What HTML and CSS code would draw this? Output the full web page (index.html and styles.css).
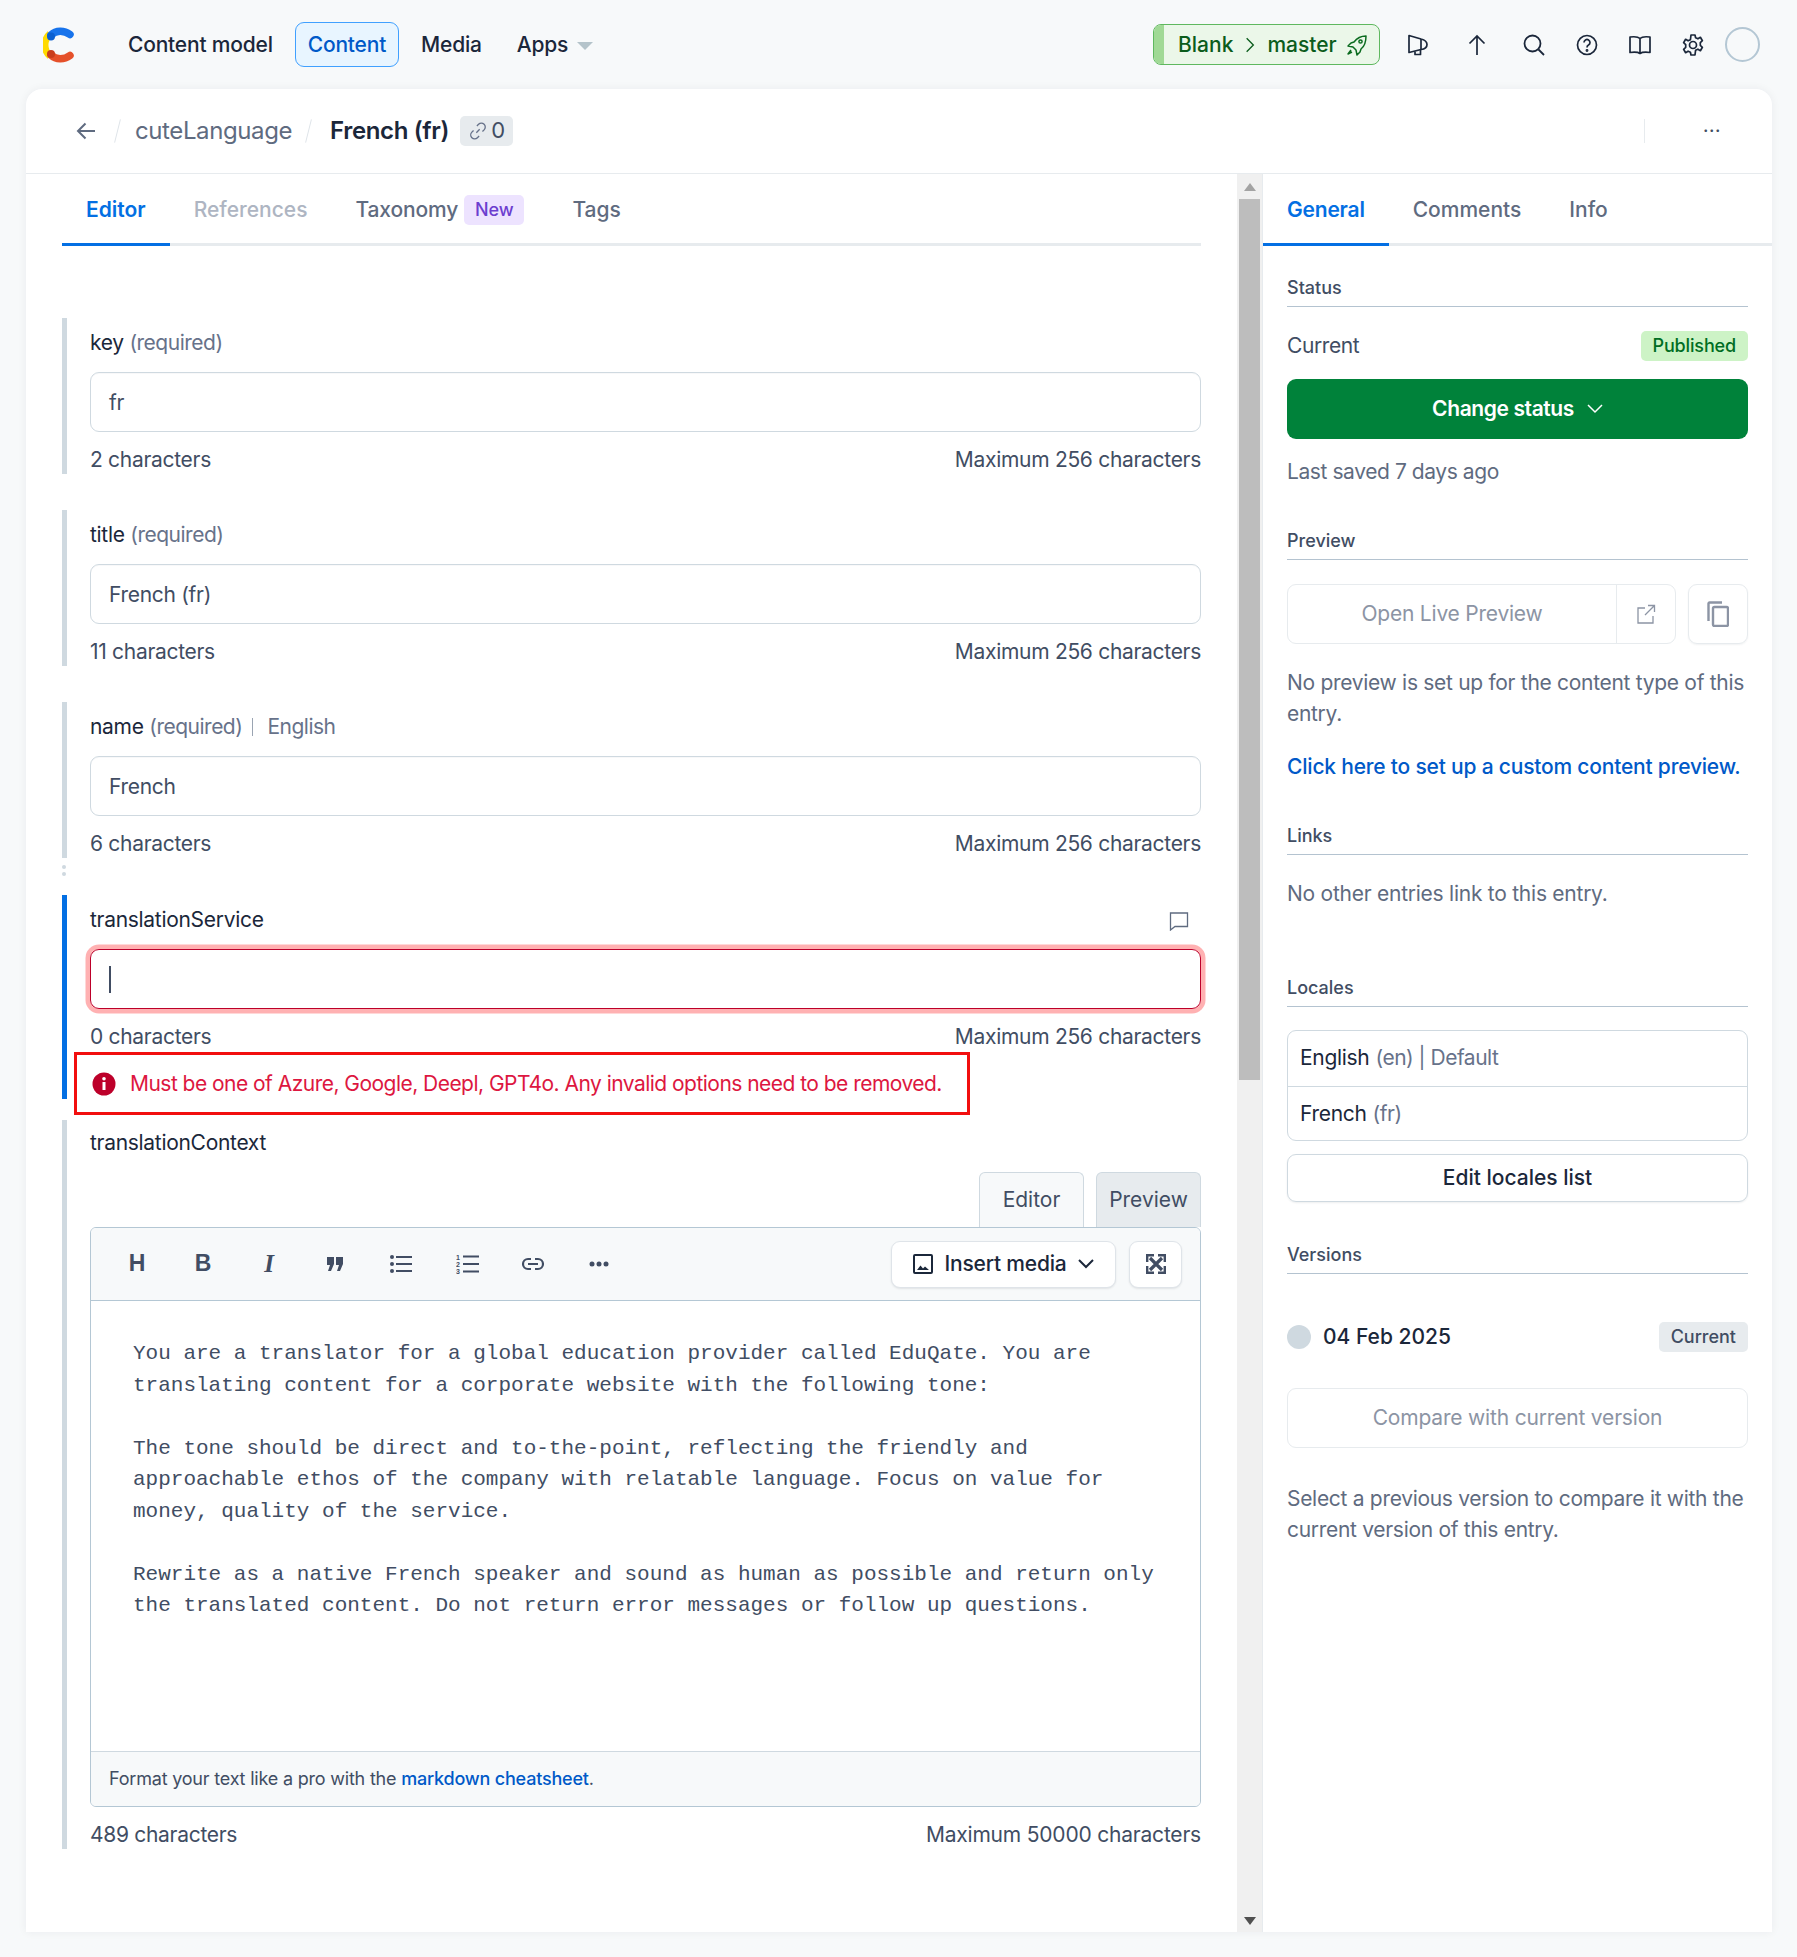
FILE: index.html
```html
<!DOCTYPE html>
<html lang="en">
<head>
<meta charset="utf-8">
<title>French (fr) - Contentful</title>
<link rel="stylesheet" href="styles.css">
</head>
<body>
<div class="app">
  <nav class="topnav">
    <svg class="logo" viewBox="0 0 33 36" width="33" height="36">
      <path d="M7 29 A14.5 14.5 0 0 1 7 7" fill="none" stroke="#ffda00" stroke-width="7"/>
      <path d="M8 8 C13 3 21 3 27 7.5" fill="none" stroke="#1773eb" stroke-width="7.5" stroke-linecap="round"/>
      <path d="M8 28 C13 33 21 33 27 28.5" fill="none" stroke="#e5512a" stroke-width="7.5" stroke-linecap="round"/>
      <circle cx="8" cy="9.5" r="4" fill="#0a5fd0"/>
      <circle cx="8" cy="27" r="4" fill="#c93e1d"/>
    </svg>
    <a class="navlink">Content model</a>
    <a class="navlink active">Content</a>
    <a class="navlink">Media</a>
    <a class="navlink apps">Apps<span class="caret"></span></a>
    <div class="nav-right">
      <div class="env">
        <span class="env-strip"></span>
        <span>Blank</span>
        <svg class="env-chevron" viewBox="0 0 12 20" width="10" height="18"><path d="M2 2l8 8-8 8" fill="none" stroke="#0b5c1c" stroke-width="1.6"/></svg>
        <span>master</span>
        <svg viewBox="0 0 22 22" width="22" height="22" fill="none" stroke="#0b6b1f" stroke-width="1.5" stroke-linejoin="round"><path d="M20 2c-5 0-9 2-12 6l-3 1-3 3 5 1 3 3 1 5 3-3 1-3c4-3 5-8 5-13z"/><circle cx="14.5" cy="7.5" r="1.6"/><path d="M5 16l-3 4 4-2"/></svg>
      </div>
      <div class="nav-icons">
        <svg viewBox="0 0 24 24" width="24" height="24" fill="none" stroke="#1b273a" stroke-width="1.7" stroke-linejoin="round"><path d="M3 2.500l12 3.500c4 1 6 3 6 5.500s-2 4.500-6 5l-12 3z"/><path d="M9 18.500v3h5.500v-5"/><path d="M15 6v11"/></svg>
        <svg class="icon-up" viewBox="0 0 24 24" width="24" height="24" fill="none" stroke="#1b273a" stroke-width="1.7"><path d="M12 22V3M4.500 10.500L12 3l7.500 7.500"/></svg>
        <svg class="icon-search" viewBox="0 0 24 24" width="24" height="24" fill="none" stroke="#1b273a" stroke-width="1.800"><circle cx="10.500" cy="10.500" r="8"/><path d="M16.500 16.500L22 22"/></svg>
        <svg viewBox="0 0 24 24" width="24" height="24" fill="none" stroke="#1b273a" stroke-width="1.700"><circle cx="12" cy="12" r="9.500"/><path d="M9 9.500a3 3 0 1 1 4.500 2.600c-1 .6-1.500 1.200-1.500 2.400"/><circle cx="12" cy="17.500" r=".6"/></svg>
        <svg viewBox="0 0 24 24" width="24" height="24" fill="none" stroke="#1b273a" stroke-width="1.700" stroke-linejoin="round"><path d="M12 5.500C10 3.500 6 3.500 2 4v15.500c4-.5 8-.5 10 1 2-1.500 6-1.500 10-1V4c-4-.5-8-.5-10 1.500zM12 5.500v15"/></svg>
        <svg viewBox="0 0 24 24" width="24" height="24" fill="none" stroke="#1b273a" stroke-width="1.700" stroke-linejoin="round"><circle cx="12" cy="12" r="3.500"/><path d="M10 2h4l.6 2.800 2.300 1 2.500-1.500 2 3.400-2.100 1.900v2.800l2.100 1.900-2 3.400-2.500-1.500-2.300 1L14 22h-4l-.6-2.800-2.300-1-2.500 1.500-2-3.400 2.100-1.900V11.600L2.600 9.700l2-3.400 2.500 1.500 2.300-1z"/></svg>
      </div>
      <span class="avatar"></span>
    </div>
  </nav>

  <main class="card">
    <header class="crumbs">
      <svg class="back" viewBox="0 0 22 22" width="22" height="22" fill="none" stroke="#5f6b80" stroke-width="2"><path d="M20 11H3M10.500 3.500L3 11l7.500 7.500"/></svg>
      <span class="slash"></span>
      <span class="crumb">cuteLanguage</span>
      <span class="slash"></span>
      <span class="crumb-current">French (fr)</span>
      <span class="linkcount">
        <svg viewBox="0 0 18 18" width="20" height="20" fill="none" stroke="#67728a" stroke-width="1.200"><path d="M7.500 10.500l3-3M8 4.500l1.500-1.500a3.500 3.500 0 0 1 5 5L13 9.500M10 13.500L8.500 15a3.500 3.500 0 0 1-5-5L5 8.500"/></svg>
        0
      </span>
      <span class="crumbs-right">
        <span class="vline"></span>
        <span class="dots">···</span>
      </span>
    </header>

    <div class="panes">
      <section class="left">
        <div class="tabs">
          <span class="tab on">Editor</span>
          <span class="tab off">References</span>
          <span class="tab tight-tab">Taxonomy<span class="newbadge">New</span></span>
          <span class="tab">Tags</span>
        </div>

        <div class="field first">
          <div class="label">key <span class="muted">(required)</span></div>
          <div class="input">fr</div>
          <div class="counter"><span>2 characters</span><span>Maximum 256 characters</span></div>
        </div>
        <div class="field">
          <div class="label">title <span class="muted">(required)</span></div>
          <div class="input">French (fr)</div>
          <div class="counter"><span>11 characters</span><span>Maximum 256 characters</span></div>
        </div>
        <div class="field">
          <div class="label">name <span class="muted">(required)</span><span class="pipe"></span><span class="muted">English</span></div>
          <div class="input">French</div>
          <div class="counter"><span>6 characters</span><span>Maximum 256 characters</span></div>
        </div>
        <div class="handle"><i></i><i></i></div>
        <div class="field focus">
          <div class="label between">translationService
            <svg viewBox="0 0 20 20" width="20" height="20" fill="none" stroke="#5f6b80" stroke-width="1.300"><path d="M1.500 2h17v13.500H6L1.500 19z"/></svg>
          </div>
          <div class="input invalid"><span class="caretline"></span></div>
          <div class="counter"><span>0 characters</span><span>Maximum 256 characters</span></div>
          <div class="error">
            <svg class="error-icon" viewBox="0 0 24 24" width="24" height="24"><circle cx="12" cy="12" r="11.500" fill="#bd002a"/><rect x="10.500" y="10" width="3" height="8" fill="#fff"/><circle cx="12" cy="6.800" r="1.800" fill="#fff"/></svg>
            <span>Must be one of Azure, Google, Deepl, GPT4o. Any invalid options need to be removed.</span>
          </div>
        </div>
        <div class="field rich">
          <div class="label tight">translationContext</div>
          <div class="mode-tabs">
            <span class="mode">Editor</span>
            <span class="mode sel">Preview</span>
          </div>
          <div class="md">
            <div class="toolbar">
              <span class="tool txt">H</span>
              <span class="tool txt">B</span>
              <span class="tool txt ital">I</span>
              <span class="tool"><svg viewBox="0 0 18 14" width="18" height="14" fill="#414d63"><path d="M1 0h7v7l-3 7H2l2-6H1zM10 0h7v7l-3 7h-3l2-6h-3z"/></svg></span>
              <span class="tool"><svg viewBox="0 0 22 18" width="22" height="18" fill="#414d63"><circle cx="2" cy="2" r="2"/><circle cx="2" cy="9" r="2"/><circle cx="2" cy="16" r="2"/><rect x="6" y="1" width="16" height="2"/><rect x="6" y="8" width="16" height="2"/><rect x="6" y="15" width="16" height="2"/></svg></span>
              <span class="tool"><svg viewBox="0 0 23 20" width="23" height="20" fill="#414d63"><text x="0" y="5.500" class="olnum">1</text><text x="0" y="12.500" class="olnum">2</text><text x="0" y="19.500" class="olnum">3</text><rect x="7" y="1.500" width="16" height="2"/><rect x="7" y="9" width="16" height="2"/><rect x="7" y="16.500" width="16" height="2"/></svg></span>
              <span class="tool"><svg viewBox="0 0 24 14" width="24" height="14" fill="none" stroke="#414d63" stroke-width="2.200"><path d="M10 2H7a5 5 0 0 0 0 10h3M14 2h3a5 5 0 0 1 0 10h-3M7 7h10"/></svg></span>
              <span class="tool"><svg viewBox="0 0 20 6" width="20" height="6" fill="#414d63"><circle cx="3" cy="3" r="2.500"/><circle cx="10" cy="3" r="2.500"/><circle cx="17" cy="3" r="2.500"/></svg></span>
              <span class="toolbar-right">
                <span class="btn insert">
                  <svg viewBox="0 0 20 20" width="20" height="20" fill="none" stroke="#1b273a" stroke-width="2"><rect x="1" y="1" width="18" height="18" rx="1"/><path d="M4 16l3.500-4.500 2.500 3 2-2 4 3.500z" fill="#1b273a" stroke="none"/></svg>
                  Insert media
                  <svg viewBox="0 0 16 10" width="16" height="10" fill="none" stroke="#1b273a" stroke-width="2"><path d="M1 1l7 7 7-7"/></svg>
                </span>
                <span class="btn square">
                  <svg viewBox="0 0 20 20" width="20" height="20" fill="none" stroke="#414d63" stroke-width="3.200"><path d="M4 4l12 12M16 4L4 16"/><path d="M1.200 8V1.200H8M12 1.200h6.800V8M18.800 12v6.800H12M8 18.800H1.200V12" stroke-width="2.400"/></svg>
                </span>
              </span>
            </div>
            <div class="md-body">You are a translator for a global education provider called EduQate. You are
translating content for a corporate website with the following tone:

The tone should be direct and to-the-point, reflecting the friendly and
approachable ethos of the company with relatable language. Focus on value for
money, quality of the service.

Rewrite as a native French speaker and sound as human as possible and return only
the translated content. Do not return error messages or follow up questions.</div>
            <div class="md-foot">Format your text like a pro with the <a class="link-strong">markdown cheatsheet</a>.</div>
          </div>
          <div class="counter"><span>489 characters</span><span>Maximum 50000 characters</span></div>
        </div>
      </section>

      <div class="scrollbar">
        <span class="arrow up"></span>
        <span class="thumb"></span>
        <span class="arrow down"></span>
      </div>

      <aside class="side">
        <div class="tabs side-tabs">
          <span class="tab on">General</span>
          <span class="tab">Comments</span>
          <span class="tab">Info</span>
        </div>
        <div class="side-body">
          <h3 class="head h-status">Status</h3>
          <div class="status-row"><span>Current</span><span class="pill">Published</span></div>
          <div class="btn-primary">Change status
            <svg viewBox="0 0 16 10" width="16" height="10" fill="none" stroke="#fff" stroke-width="1.500"><path d="M1 1l7 7 7-7"/></svg>
          </div>
          <p class="text saved">Last saved 7 days ago</p>

          <h3 class="head h-preview">Preview</h3>
          <div class="preview-row">
            <div class="ghost-group">
              <span class="ghost-main">Open Live Preview</span>
              <span class="ghost-icon"><svg viewBox="0 0 20 20" width="20" height="20" fill="none" stroke="#8c94a4" stroke-width="1.300"><path d="M9 4H2v15h15v-7M12 1.500h6.500V8M18.500 1.500L9 11"/></svg></span>
            </div>
            <span class="ghost-copy"><svg viewBox="0 0 22 26" width="22" height="26" fill="none" stroke="#8c94a4" stroke-width="2.400"><path d="M15 1.500H2.500a1 1 0 0 0-1 1V20"/><rect x="6" y="6" width="15" height="19" rx="1.500"/></svg></span>
          </div>
          <p class="text nopreview">No preview is set up for the content type of this entry.</p>
          <p class="text setup"><a class="link-strong">Click here to set up a custom content preview.</a></p>

          <h3 class="head h-links">Links</h3>
          <p class="text nolinks">No other entries link to this entry.</p>

          <h3 class="head h-locales">Locales</h3>
          <div class="locales">
            <div class="locale">English <span class="muted">(en) | Default</span></div>
            <div class="locale">French <span class="muted">(fr)</span></div>
          </div>
          <div class="btn-edit">Edit locales list</div>

          <h3 class="head h-versions">Versions</h3>
          <div class="version"><span class="vdot"></span><span class="vdate">04 Feb 2025</span><span class="pill-grey">Current</span></div>
          <div class="ghost-wide">Compare with current version</div>
          <p class="text compare-note">Select a previous version to compare it with the current version of this entry.</p>
        </div>
      </aside>
    </div>
  </main>
</div>
</body>
</html>
```
FILE: styles.css
```css
* { box-sizing: border-box; }
html, body { margin: 0; padding: 0; }
body {
  background: #f7f9fa;
  color: #1b273a;
  font-family: "Inter", "Liberation Sans", sans-serif;
  font-size: 21px;
  line-height: 31.5px;
}
.app { width: 1797px; height: 1957px; display: flex; flex-direction: column; }

.topnav { height: 89px; flex: none; display: flex; align-items: center; padding: 0 37px 0 43px; }
.logo { margin-right: 39px; flex: none; }
.navlink { padding: 0 12px; height: 45px; line-height: 43px; margin-right: 9px; font-weight: 500; border: 1px solid transparent; border-radius: 9px; letter-spacing: -.2px; }
.navlink.active { background: #e8f5ff; border-color: #40a0ff; color: #0059c8; }
.navlink.apps { display: flex; align-items: center; gap: 9px; }
.caret { width: 0; height: 0; border-left: 8px solid transparent; border-right: 8px solid transparent; border-top: 8px solid #b4c3ca; margin-top: 2px; }
.nav-right { margin-left: auto; display: flex; align-items: center; }
.env { position: relative; display: flex; align-items: center; gap: 9px; height: 41px; width: 227px; padding-left: 24px; background: #ebf7e9; border: 1px solid #5fb85f; border-radius: 8px; color: #0b5c1c; font-weight: 500; overflow: hidden; white-space: nowrap; }
.env-strip { position: absolute; left: 0; top: 0; bottom: 0; width: 10px; background: #a0d995; }
.env-chevron { margin: 0 3px; }
.nav-icons { display: flex; align-items: center; gap: 29px; margin-left: 26px; }
.icon-up { margin-left: 6px; }
.icon-search { margin-left: 4px; }
.avatar { width: 35px; height: 35px; border-radius: 50%; border: 2px solid #b4c7d4; margin-left: 20px; }

.card { flex: none; width: 1746px; height: 1843px; margin-left: 26px; background: #fff; border-radius: 16px 16px 0 0; box-shadow: 0 0 10px rgba(25, 37, 50, .06); display: flex; flex-direction: column; overflow: hidden; }
.crumbs { height: 85px; flex: none; display: flex; align-items: center; padding-left: 49px; padding-right: 40px; border-bottom: 1px solid #e7ebee; }
.back { flex: none; }
.slash { width: 1px; height: 24px; background: #dfe4e9; transform: rotate(14deg); margin: 0 17px 0 20px; }
.crumb { color: #5f6b80; font-size: 24px; letter-spacing: -.4px; }
.crumb + .slash { margin: 0 21px 0 16px; }
.crumb-current { font-size: 24px; font-weight: 600; letter-spacing: -.35px; }
.linkcount { display: flex; align-items: center; gap: 3px; margin-left: 11px; height: 30px; padding: 0 8px; background: #e7ebee; border-radius: 5px; color: #414d63; font-size: 22px; }
.crumbs-right { margin-left: auto; display: flex; align-items: center; }
.vline { width: 1px; height: 24px; background: #e7ebee; margin-right: 58px; }
.dots { color: #414d63; font-size: 18px; letter-spacing: .5px; width: 29px; font-weight: 500; }

.panes { flex: 1; display: flex; min-height: 0; }
.left { width: 1211px; flex: none; padding: 0 36px; }
.tabs { height: 72px; display: flex; border-bottom: 3px solid #e7ebee; }
.tab { height: 72px; padding: 3px 24px 0; display: flex; align-items: center; font-weight: 500; color: #5f6b80; white-space: nowrap; border-bottom: 3px solid transparent; }
.tab.on { color: #036fe3; border-bottom-color: #036fe3; font-weight: 600; }
.tab.off { color: #aeb5c2; }
.tight-tab { letter-spacing: -.15px; }
.side-tabs .tab.on { letter-spacing: -.2px; }
.newbadge { margin-left: 6px; height: 30px; padding: 0 11px; line-height: 30px; font-size: 18px; background: #ede3ff; color: #6c3ecf; border-radius: 5px; }

.field { border-left: 5px solid #cfd9e0; padding-left: 23px; height: 156px; margin-top: 36px; }
.field.first { margin-top: 72px; }
.field.focus { border-left-color: #036fe3; height: 204px; margin-top: 0; }
.field.rich { height: 729px; margin-top: 21px; }
.label { height: 54px; padding-top: 9px; white-space: nowrap; letter-spacing: -.3px; }
.label.between { display: flex; justify-content: space-between; padding-right: 12px; }
.label.between svg { margin-top: 7px; }
.label.tight { height: 52px; padding-top: 7px; }
.muted { color: #67728a; letter-spacing: -.5px; }
.pipe { display: inline-block; width: 1px; height: 18px; background: #9aa4b2; margin: 0 14px 0 10px; vertical-align: -2px; }
.input { height: 60px; border: 1px solid #cfd9e0; border-radius: 9px; padding: 0 18px; line-height: 60px; color: #414d63; letter-spacing: -.3px; box-shadow: inset 0 1px 0 rgba(25, 37, 50, .03); }
.input.invalid { border: 1.5px solid #bd002a; box-shadow: 0 0 0 4.5px #ffb1b2; display: flex; align-items: center; padding-left: 18px; }
.caretline { width: 2px; height: 27px; background: #414d63; }
.counter { height: 42px; padding-top: 12px; display: flex; justify-content: space-between; color: #414d63; letter-spacing: -.3px; }
.rich .counter span:last-child { letter-spacing: -.2px; }
.handle { height: 37px; padding-top: 7px; display: flex; flex-direction: column; gap: 3px; }
.handle i { display: block; width: 4px; height: 4px; border-radius: 50%; background: #cfd9e0; }
.error { width: 896px; height: 63px; margin: 1px 0 0 -16px; padding-left: 15px; display: flex; align-items: center; gap: 14px; border: 3px solid #f20f0f; color: #dd1740; white-space: nowrap; background: #fff; position: relative; letter-spacing: -.53px; }
.error-icon { flex: none; }

.mode-tabs { display: flex; justify-content: flex-end; gap: 12px; height: 55px; }
.mode { width: 105px; height: 55px; display: flex; align-items: center; justify-content: center; border: 1px solid #cfd9e0; border-bottom: 0; border-radius: 6px 6px 0 0; background: #f7f9fa; color: #414d63; }
.mode.sel { background: #e7ebee; }
.md { border: 1px solid #b4c7d4; border-radius: 6px; height: 580px; display: flex; flex-direction: column; overflow: hidden; }
.toolbar { height: 73px; flex: none; background: #f7f9fa; border-bottom: 1px solid #b4c7d4; display: flex; align-items: center; padding-left: 13px; padding-right: 18px; }
.tool { width: 66px; height: 46px; flex: none; display: flex; align-items: center; justify-content: center; color: #414d63; }
.tool.txt { font-family: "Liberation Sans", sans-serif; font-weight: 700; font-size: 23px; }
.tool.ital { font-family: "Liberation Serif", serif; font-style: italic; font-size: 25px; }
.olnum { font-family: "Liberation Sans", sans-serif; font-size: 7px; font-weight: 700; }
.toolbar-right { margin-left: auto; display: flex; gap: 13px; }
.btn { height: 47px; display: flex; align-items: center; justify-content: center; background: #fff; border: 1px solid #dfe4e9; border-radius: 9px; box-shadow: 0 1px 2px rgba(25, 37, 50, .1); font-weight: 500; letter-spacing: -.2px; }
.insert { width: 225px; gap: 11px; }
.square { width: 53px; }
.md-body { flex: 1; padding: 37px 20px 0 42px; font-family: "Liberation Mono", monospace; font-size: 21px; line-height: 31.5px; white-space: pre-wrap; color: #414d63; }
.md-foot { height: 55px; flex: none; background: #f7f9fa; border-top: 1px solid #cfd9e0; padding-left: 18px; line-height: 54px; font-size: 18px; color: #414d63; letter-spacing: -.2px; }
.link-strong { color: #0059c8; font-weight: 500; }

.scrollbar { width: 26px; flex: none; background: #f0f0f0; border-right: 1px solid #e7ebee; display: flex; flex-direction: column; align-items: center; padding-bottom: 7px; }
.arrow { width: 0; height: 0; border-left: 6px solid transparent; border-right: 6px solid transparent; flex: none; }
.arrow.up { border-bottom: 8px solid #a3a3a3; margin-top: 9px; }
.arrow.down { border-top: 8px solid #505050; margin-top: auto; }
.thumb { width: 21px; height: 881px; background: #bdbdbd; margin-top: 8px; flex: none; margin-right: 1px; }

.side { flex: 1; min-width: 0; }
.side-body { padding: 0 24px; }
.head { margin: 0; height: 33px; font-size: 18px; line-height: 27px; font-weight: 500; color: #414d63; border-bottom: 1px solid #b4c3d0; }
.text { margin: 0; color: #5f6b80; letter-spacing: -.3px; }
.h-status { margin-top: 28px; }
.status-row { margin-top: 24px; height: 30px; display: flex; justify-content: space-between; align-items: center; color: #414d63; letter-spacing: -.4px; }
.pill { height: 30px; line-height: 30px; padding: 0 12px; background: #cdf3c6; color: #006d23; font-size: 18px; font-weight: 500; border-radius: 5px; letter-spacing: -.15px; }
.btn-primary { margin-top: 18px; height: 60px; background: #00823a; color: #fff; font-weight: 600; border-radius: 9px; display: flex; align-items: center; justify-content: center; gap: 13px; letter-spacing: -.4px; }
.saved { margin-top: 17px; letter-spacing: -.42px; }
.h-preview { margin-top: 39px; }
.preview-row { margin-top: 24px; display: flex; justify-content: space-between; }
.ghost-group { width: 389px; height: 60px; display: flex; border: 1px solid #e7ebee; border-radius: 9px; color: #8c94a4; letter-spacing: -.22px; }
.ghost-main { flex: 1; display: flex; align-items: center; justify-content: center; }
.ghost-icon { width: 59px; border-left: 1px solid #e7ebee; display: flex; align-items: center; justify-content: center; }
.ghost-copy { width: 60px; height: 60px; border: 1px solid #e7ebee; border-radius: 9px; display: flex; align-items: center; justify-content: center; box-shadow: 0 1px 2px rgba(25, 37, 50, .06); }
.nopreview { margin-top: 23px; }
.setup { margin-top: 21px; letter-spacing: -.2px; }
.h-links { margin-top: 40px; }
.nolinks { margin-top: 23px; letter-spacing: -.25px; }
.h-locales { margin-top: 64px; }
.locales { margin-top: 23px; height: 111px; border: 1px solid #cfd9e0; border-radius: 9px; }
.locale { height: 55px; padding: 0 12px; display: flex; align-items: center; gap: 6px; letter-spacing: -.3px; }
.locale + .locale { border-top: 1px solid #cfd9e0; }
.btn-edit { margin-top: 13px; height: 48px; border: 1px solid #cfd9e0; border-radius: 9px; display: flex; align-items: center; justify-content: center; font-weight: 500; box-shadow: 0 1px 2px rgba(25, 37, 50, .08); }
.h-versions { margin-top: 39px; }
.version { margin-top: 48px; height: 30px; display: flex; align-items: center; }
.vdot { width: 24px; height: 24px; border-radius: 50%; background: #cfd9e0; margin-right: 12px; }
.vdate { font-weight: 500; }
.pill-grey { margin-left: auto; height: 30px; line-height: 30px; padding: 0 12px; background: #e7ebee; color: #414d63; font-size: 18px; font-weight: 500; border-radius: 5px; }
.ghost-wide { margin-top: 36px; height: 60px; border: 1px solid #e7ebee; border-radius: 9px; display: flex; align-items: center; justify-content: center; color: #8c94a4; letter-spacing: -.18px; }
.compare-note { margin-top: 35px; }
```
